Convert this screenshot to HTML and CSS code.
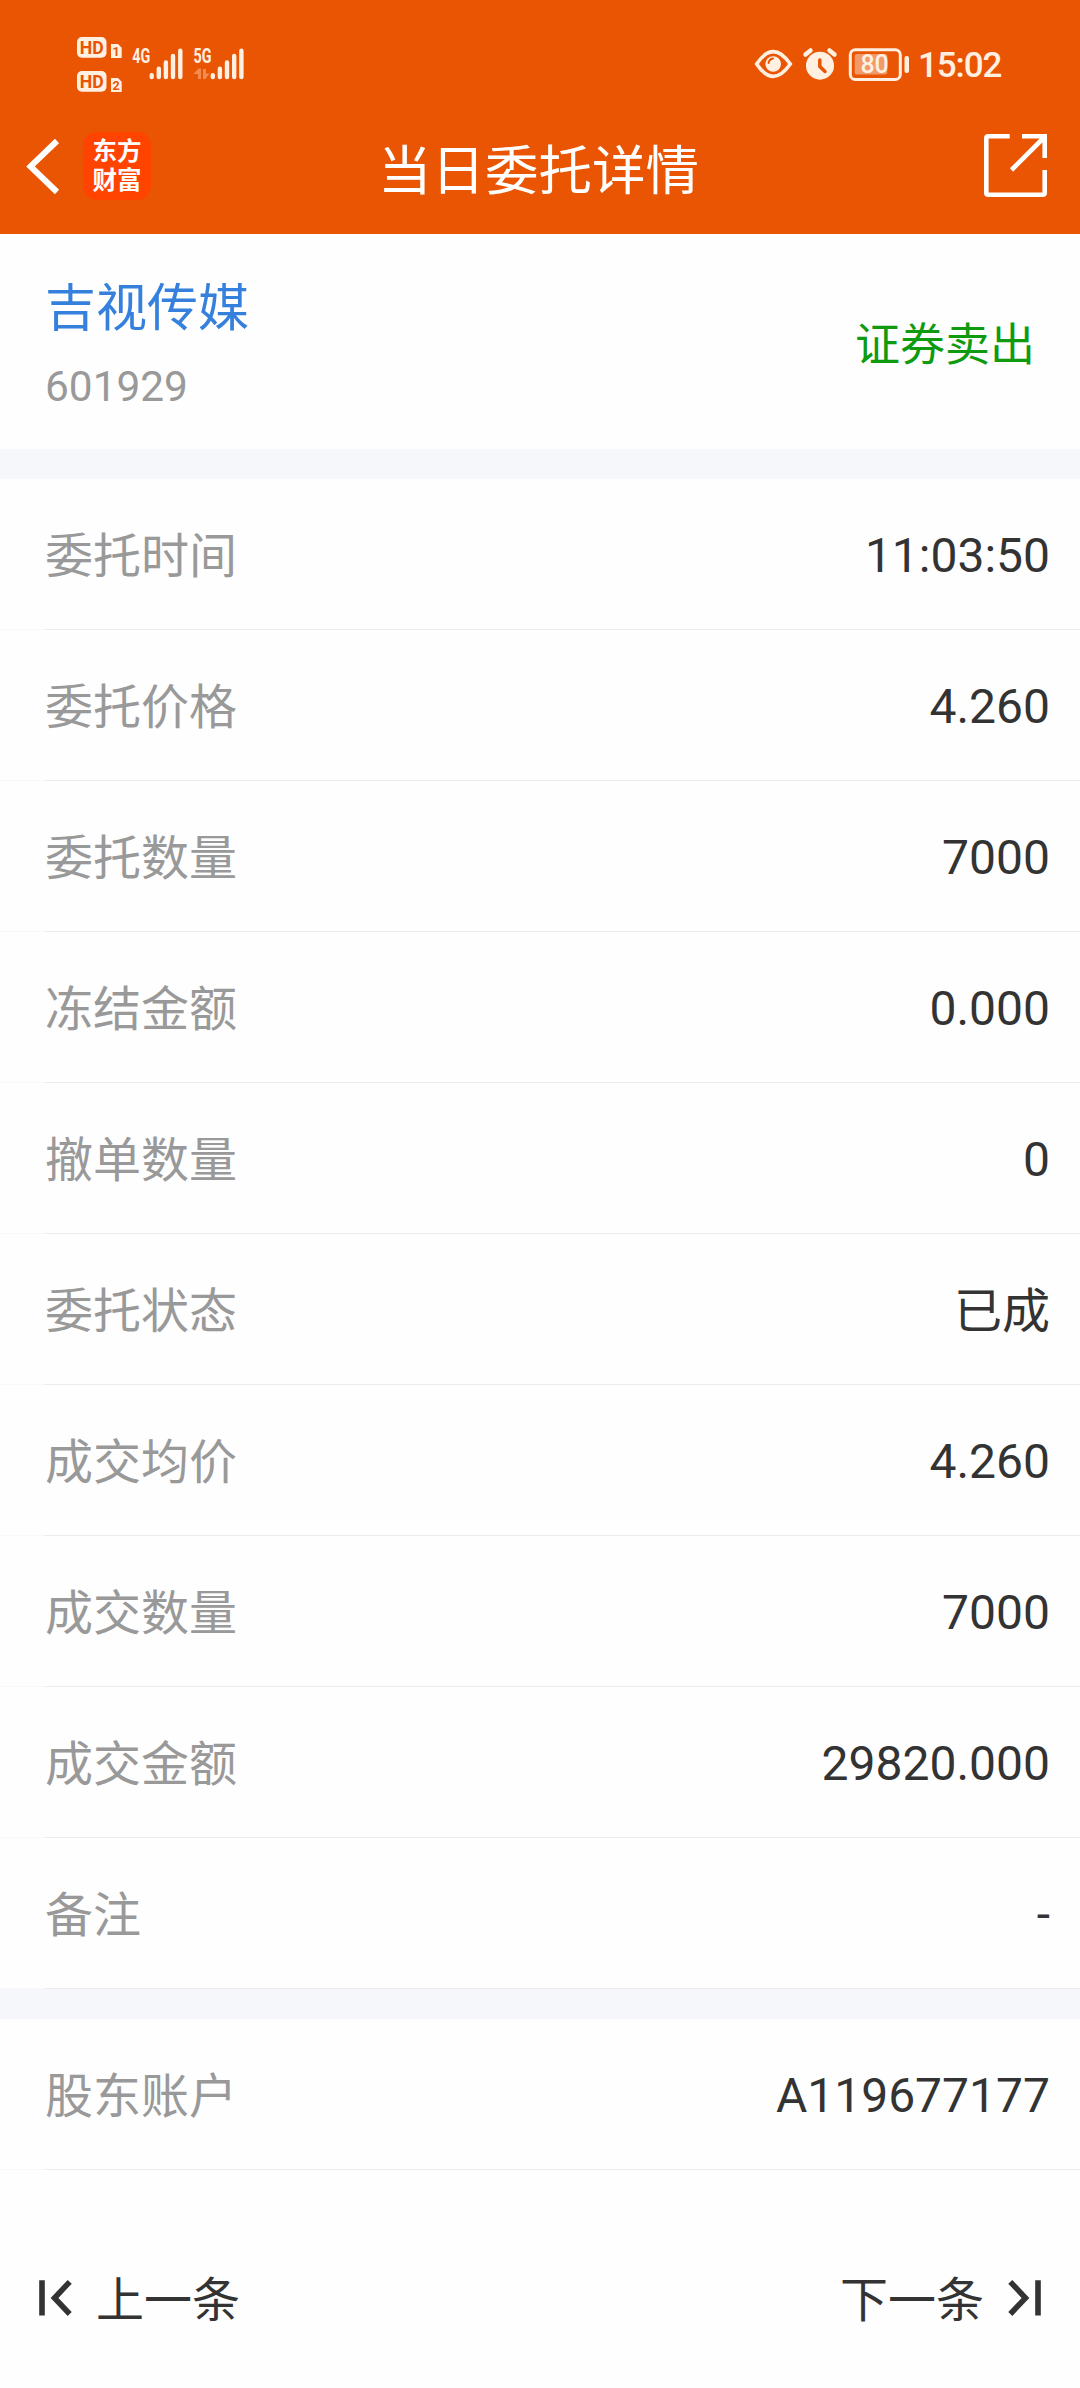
FILE: index.html
```html
<!DOCTYPE html>
<html lang="zh-CN">
<head>
    <meta charset="UTF-8">
    <meta name="viewport" content="width=device-width, initial-scale=1.0">
    <title>当日委托详情</title>
    <link rel="stylesheet" href="styles.css">
</head>
<body>
    <header class="header">
        <div class="status-bar">
            <svg class="signal" viewBox="76 36 170 58" width="170" height="58">
                <rect x="77" y="37" width="29.5" height="20.7" rx="5"/>
                <rect x="77" y="71" width="29.5" height="20.7" rx="5"/>
                <text class="cut" x="91.7" y="53.7" font-size="18" text-anchor="middle" textLength="24" lengthAdjust="spacingAndGlyphs">HD</text>
                <text class="cut" x="91.7" y="87.8" font-size="18" text-anchor="middle" textLength="24" lengthAdjust="spacingAndGlyphs">HD</text>
                <path d="M111 44h7l3.7 3.7v10.3h-10.7z"/>
                <path d="M111 78h7l3.7 3.7v10.3h-10.7z"/>
                <text class="cut" x="116" y="56.3" font-size="12.5" text-anchor="middle">1</text>
                <text class="cut" x="116" y="90.3" font-size="12.5" text-anchor="middle">2</text>
                <text x="132.3" y="62.5" font-size="19.5" textLength="18" lengthAdjust="spacingAndGlyphs">4G</text>
                <text x="193.5" y="62.5" font-size="19.5" textLength="18" lengthAdjust="spacingAndGlyphs">5G</text>
                <path class="bars" d="M151.7 75.3v1.8M158.800 68.8v8.3M165.9 62.5v14.6M173 56v21.1M180.3 50.7v26.4"/>
                <path class="bars" d="M212.8 75.3v1.8M219.9 68.8v8.3M227 62.5v14.6M234.2 56v21.1M241.4 50.7v26.4"/>
                <path class="data" d="M201 79h-3v-5h-4.500l5-5.500h2.500zM203 69h3v4.500h3.500l-4 5.500h-2.500z"/>
            </svg>
            <div class="status-right">
                <svg class="eye" viewBox="754 46 39 36" width="39" height="36">
                    <path class="line" d="M756.7 64Q773 39.3 790.3 64Q773 88.7 756.7 64z"/>
                    <circle cx="773.2" cy="64" r="7.8"/>
                    <path class="hole" d="M768.5 63q.8-4 4.5-4.5"/>
                </svg>
                <svg class="alarm" viewBox="802 46 36 36" width="36" height="36">
                    <circle cx="820" cy="65.7" r="14"/>
                    <path class="ear" d="M805.5 54.5l5-4M834.5 54.5l-5-4"/>
                    <path class="hand" d="M819.8 60v6.5l5.2 5"/>
                </svg>
                <svg class="battery" viewBox="847 46 64 36" width="64" height="36">
                    <rect class="line" x="850.3" y="49.8" width="50" height="29.7" rx="5"/>
                    <rect class="level" x="854.7" y="54" width="32.5" height="20.5" rx="2"/>
                    <rect x="904.5" y="56" width="4.5" height="17" rx="2"/>
                    <text x="874.6" y="72.5" font-size="25" text-anchor="middle">80</text>
                </svg>
                <span class="time">15:02</span>
            </div>
        </div>
        <nav class="nav">
            <div class="nav-left">
                <svg viewBox="26 136 34 60" width="34" height="60">
                    <path class="back" d="M57 141L30.5 166.4L57 192"/>
                </svg>
                <div class="logo"><span>东方</span><span>财富</span></div>
            </div>
            <h1>当日委托详情</h1>
            <svg class="share" viewBox="984 135 63 63" width="63" height="63">
                <path d="M1009.7 137.3H988.3q-2 0-2 2V193.7q0 2 2 2H1042.7q2 0 2-2V171M1022 137.3H1044.7V159M1011.5 171L1044 138.5"/>
            </svg>
        </nav>
    </header>

    <section class="stock">
        <div class="stock-info">
            <div class="stock-name">吉视传媒</div>
            <div class="stock-code">601929</div>
        </div>
        <div class="side">证券卖出</div>
    </section>

    <section class="list">
        <div class="row"><span class="label">委托时间</span><span class="value">11:03:50</span></div>
        <div class="row"><span class="label">委托价格</span><span class="value">4.260</span></div>
        <div class="row"><span class="label">委托数量</span><span class="value">7000</span></div>
        <div class="row"><span class="label">冻结金额</span><span class="value">0.000</span></div>
        <div class="row"><span class="label">撤单数量</span><span class="value">0</span></div>
        <div class="row"><span class="label">委托状态</span><span class="value-text">已成</span></div>
        <div class="row"><span class="label">成交均价</span><span class="value">4.260</span></div>
        <div class="row"><span class="label">成交数量</span><span class="value">7000</span></div>
        <div class="row"><span class="label">成交金额</span><span class="value">29820.000</span></div>
        <div class="row"><span class="label">备注</span><span class="value">-</span></div>
    </section>

    <section class="list">
        <div class="row"><span class="label">股东账户</span><span class="value">A119677177</span></div>
    </section>

    <footer class="pager">
        <a class="page-link">
            <svg viewBox="38 2279 35 38" width="35" height="38">
                <path d="M42 2280.3V2315.5M69.7 2281.8L54.5 2298L69.7 2314"/>
            </svg>
            <span>上一条</span>
        </a>
        <a class="page-link">
            <span>下一条</span>
            <svg viewBox="1007 2279 35 38" width="35" height="38">
                <path d="M1038 2280.3V2315.5M1010.3 2281.8L1025.5 2298L1010.3 2314"/>
            </svg>
        </a>
    </footer>
</body>
</html>
```
FILE: styles.css
```css
* {
    box-sizing: border-box;
}
body {
    margin: 0;
    height: 2388px;
    display: flex;
    flex-direction: column;
    background: #fefefe;
    color: #333;
    font-family: Roboto, 'Noto Sans CJK SC', sans-serif;
    font-size: 48px;
}
svg {
    display: block;
    flex: none;
}

/* Cabecera naranja */
.header {
    height: 234px;
    background: #ea5504;
    color: #fff;
}
.status-bar {
    height: 98px;
    padding: 36px 77px 0 76px;
    display: flex;
    justify-content: space-between;
    align-items: flex-start;
}
.status-bar svg {
    fill: #fff0e2;
}
.status-bar text {
    font-family: Roboto, sans-serif;
    font-weight: 500;
}
.signal text {
    font-weight: 700;
}
.status-bar .cut {
    fill: #ea5504;
}
.bars {
    stroke: #fff0e2;
    stroke-width: 4.4;
    stroke-linecap: round;
}
.data {
    fill: #f38a50;
}
.status-right {
    display: flex;
    align-items: flex-start;
    padding-top: 10px;
}
.line {
    fill: none;
    stroke: #fff0e2;
    stroke-width: 3;
}
.eye .line {
    stroke-width: 3.6;
}
.hole, .hand {
    fill: none;
    stroke: #ea5504;
    stroke-width: 2;
    stroke-linecap: round;
}
.hand {
    stroke-width: 3.5;
}
.ear {
    stroke: #fff0e2;
    stroke-width: 4.5;
    stroke-linecap: round;
}
.level {
    fill: #f29a68;
}
.alarm {
    margin-left: 9px;
}
.battery {
    margin-left: 9px;
}
.time {
    width: 85px;
    margin-left: 7px;
    padding-top: 1px;
    font-size: 35px;
    font-weight: 500;
    line-height: 38px;
    letter-spacing: -1.1px;
    color: #fff0e2;
    white-space: nowrap;
}
.nav {
    height: 136px;
    padding: 0 33px 0 26px;
    display: grid;
    grid-template-columns: 1fr auto 1fr;
    align-items: center;
    padding-bottom: 1px;
}
.nav-left {
    display: flex;
    align-items: center;
    gap: 23px;
}
.back {
    fill: none;
    stroke: #fff;
    stroke-width: 6;
}
.logo {
    width: 68px;
    height: 68px;
    border-radius: 14px;
    background: #ff4300;
    display: flex;
    flex-direction: column;
    align-items: center;
    justify-content: center;
    font-size: 24.5px;
    font-weight: 700;
    line-height: 29px;
}
.nav h1 {
    margin: 0 0 0 4px;
    padding-top: 12px;
    font-size: 53.5px;
    font-weight: 400;
    line-height: 80px;
}
.share {
    justify-self: end;
    fill: none;
    stroke: #fff;
    stroke-width: 4.6;
}

/* Acción y tipo de operación */
.stock {
    height: 215px;
    padding: 0 45px;
    display: flex;
    justify-content: space-between;
    align-items: center;
}
.stock-info {
    padding-top: 14px;
}
.stock-name {
    font-size: 51px;
    line-height: 76px;
    color: #3580dc;
}
.stock-code {
    font-size: 42.4px;
    line-height: 80px;
    color: #999;
}
.side {
    font-size: 45px;
    color: #109a10;
}

/* Filas de datos */
.list {
    border-top: 30px solid #f6f7fa;
}
.row {
    height: 151px;
    padding: 0 30px 0 45px;
    display: flex;
    justify-content: space-between;
    align-items: center;
    background: linear-gradient(to right, #f8f8f8 45px, #ebebec 45px) no-repeat bottom / 100% 1px;
}
.label {
    color: #999;
}
.label, .value-text {
    padding-bottom: 5px;
}
.value {
    padding-top: 2px;
}

/* Navegación inferior */
.pager {
    flex: 1;
    padding: 38px 38px 0;
    display: flex;
    justify-content: space-between;
    align-items: center;
}
.page-link {
    display: flex;
    align-items: center;
    gap: 23px;
}
.page-link span {
    padding-bottom: 4px;
}
.page-link path {
    fill: none;
    stroke: #333;
    stroke-width: 5.6;
}
```
